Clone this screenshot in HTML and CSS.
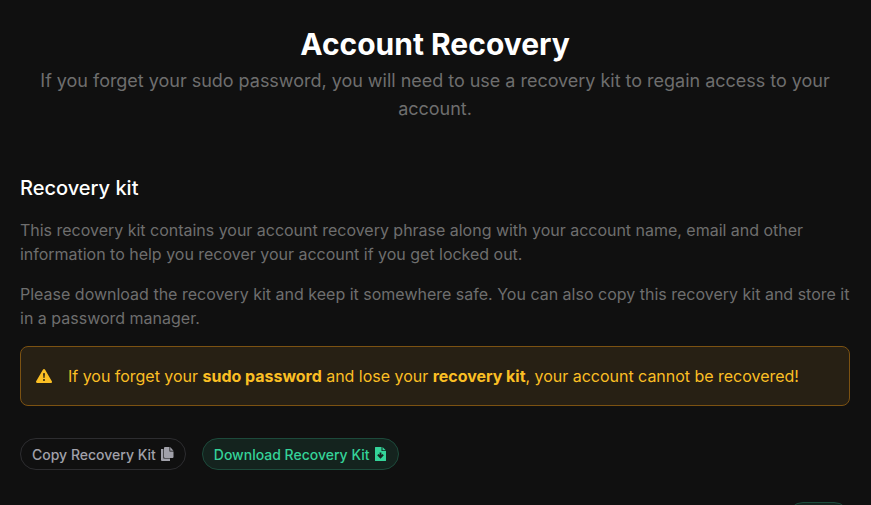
FILE: index.html
```html
<!DOCTYPE html>
<html lang="en">
<head>
<meta charset="utf-8">
<title>Account Recovery</title>
<link rel="stylesheet" href="styles.css">
</head>
<body>
<main class="page">
  <header class="header">
    <h1 class="title">Account Recovery</h1>
    <p class="subtitle">If you forget your sudo password, you will need to use a recovery kit to regain access to your account.</p>
  </header>
  <section class="kit">
    <h2 class="kit-title">Recovery kit</h2>
    <p class="text text-tight">This recovery kit contains your account recovery phrase along with your account name, email and other information to help you recover your account if you get locked out.</p>
    <p class="text">Please download the recovery kit and keep it somewhere safe. You can also copy this recovery kit and store it in a password manager.</p>
    <div class="alert">
      <svg class="alert-icon" viewBox="0 0 16 16"><path fill="currentColor" fill-rule="evenodd" d="M8.980 1.570a1.130 1.130 0 0 0-1.960 0L.160 13.230c-.450.780.100 1.770.980 1.770h13.720c.890 0 1.440-.990.980-1.770zM8 5c.540 0 .950.460.900 1l-.350 3.500a.550.550 0 0 1-1.100 0L7.100 6A.900.900 0 0 1 8 5zm0 6a1 1 0 1 1 0 2 1 1 0 0 1 0-2z"/></svg>
      <p class="alert-text">If you forget your <strong>sudo password</strong> and lose your <strong>recovery kit</strong>, your account cannot be recovered!</p>
    </div>
    <div class="actions">
      <button class="button"><span class="label">Copy Recovery Kit</span><svg class="icon-copy" viewBox="0 0 13 14"><path fill="currentColor" d="M0 2h2.400v9.400H9V14H1a1 1 0 0 1-1-1zM4 0h4.500v4.500H12.500V10a1 1 0 0 1-1 1H4a1 1 0 0 1-1-1V1a1 1 0 0 1 1-1zM9.200 0l3.300 3.700H9.200z"/></svg></button>
      <button class="button button-green"><span class="label">Download Recovery Kit</span><svg class="icon-file" viewBox="0 0 12 14"><path fill="currentColor" fill-rule="evenodd" d="M.5 0H6.500v4H11v9.500a.5.500 0 0 1-.5.500H.5A.5.5 0 0 1 0 13.500V.5A.5.5 0 0 1 .5 0zM4.600 5.600v2.500L3.500 7 2.200 8.300 5.500 11.700l3.300-3.400L7.500 7 6.400 8.100V5.600zM7.500 0l3.300 3.200H7.500z"/></svg></button>
    </div>
  </section>
  <footer class="footer"><div class="button button-green next"></div></footer>
</main>
</body>
</html>
```
FILE: styles.css
```css
* { box-sizing: border-box; margin: 0; }
body { height: 505px; overflow: hidden; background: #101010; color: #6e6e6e; font: 16px/24px Inter, sans-serif; }
.page { height: 505px; overflow: hidden; padding: 24px 21px 0 20px; }
.header { text-align: center; }
.title { color: #fff; font-size: 30px; line-height: 40px; font-weight: 700; }
.subtitle { margin-top: 3px; font-size: 18px; line-height: 28px; letter-spacing: -.02px; }
.kit-title { margin: 51px 0 16px; color: #fff; font-size: 20px; line-height: 28px; font-weight: 500; }
.text { margin-bottom: 16px; }
.text-tight { letter-spacing: -.015px; }
.alert { display: flex; align-items: center; gap: 16px; height: 60px; padding: 0 15px; border: 1px solid #7c5212; border-radius: 8px; background: #272014; color: #fbbf24; letter-spacing: -.02px; }
.alert-icon { width: 16px; height: 16px; }
.alert strong { font-weight: 700; }
.actions { display: flex; gap: 16px; margin-top: 32px; }
.button { display: flex; align-items: center; gap: 5px; height: 32px; padding: 0 11px; border: 1px solid #2d2d30; border-radius: 16px; background: #101010; color: #a1a1aa; font: 500 14px/20px Inter, sans-serif; }
.button-green { border-color: #1d4a3b; background: #14231e; color: #34d399; }
.label { padding-top: 2px; }
.icon-copy { width: 13px; height: 14px; }
.icon-file { width: 12px; height: 14px; }
.footer { display: flex; justify-content: flex-end; margin-top: 32px; }
.next { width: 63px; }
```
